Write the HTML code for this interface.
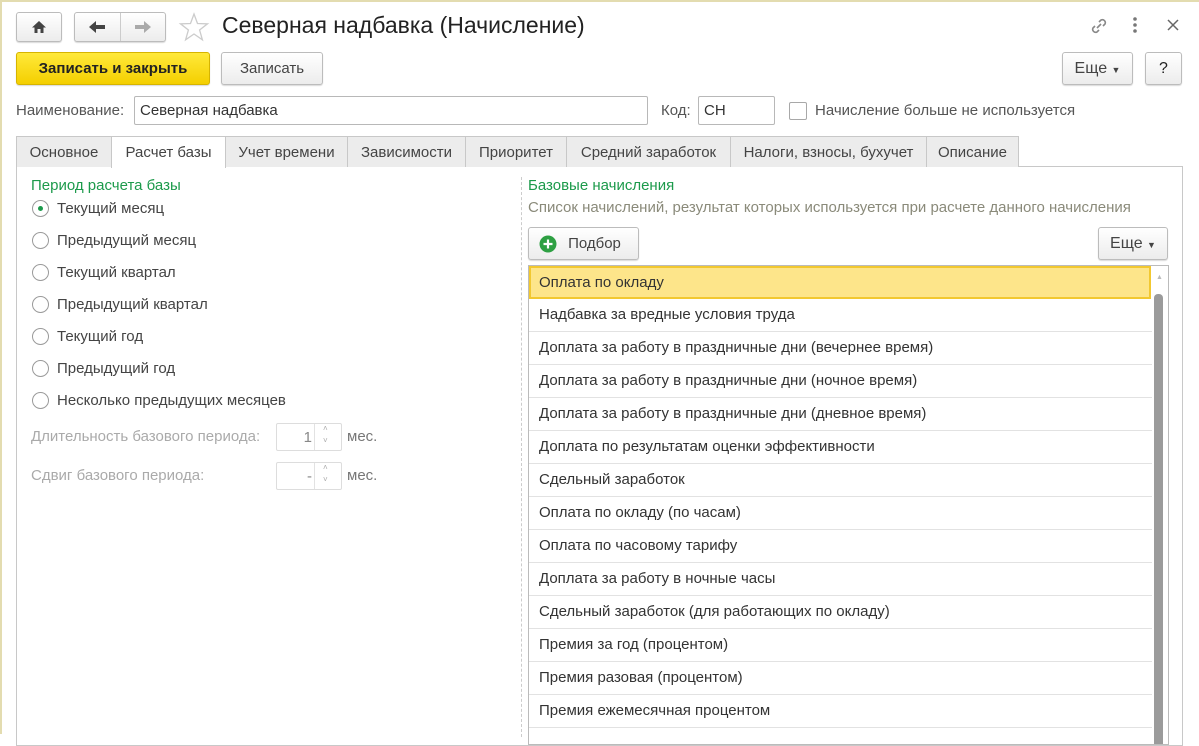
<!DOCTYPE html>
<html><head><meta charset="utf-8"><style>
*{box-sizing:border-box;margin:0;padding:0}
body{width:1199px;height:734px;overflow:hidden;background:#fff;font-family:"Liberation Sans",Arial,sans-serif;font-size:15px;color:#333;position:relative}
.a{position:absolute}
.btn{position:absolute;border:1px solid #bcbcbc;border-radius:3px;background:linear-gradient(#fff,#ececec);box-shadow:0 1px 1px rgba(0,0,0,.15);text-align:center;color:#444}
.inp{position:absolute;border:1px solid #b8b8b8;border-radius:2px;background:#fff;padding-left:5px;color:#333}
.tab{position:absolute;top:136px;height:31px;border:1px solid #c8c8c8;border-bottom:none;background:#ececec;line-height:31px;text-align:center;color:#444}
.rad{position:absolute;left:32px;width:17px;height:17px;border:1px solid #9a9a9a;border-radius:50%;background:#fff}
.rl{position:absolute;left:57px;color:#444}
.row{position:absolute;left:529px;width:623px;height:33px;border-bottom:1px solid #e2e2e2;line-height:32px;padding-left:10px;color:#333}
</style></head><body>
<div class="a" style="left:0;top:0;width:1199px;height:2px;background:#e3dcb0"></div>
<div class="a" style="left:0;top:0;width:2px;height:734px;background:#e3dcb0"></div>

<div class="btn" style="left:16px;top:12px;width:46px;height:30px"><svg width="16" height="16" viewBox="0 0 16 16" style="margin-top:6px"><path d="M8 2 L1 8.5 H3.5 V14 H6.5 V10 H9.5 V14 H12.5 V8.5 H15 Z" fill="#444"/></svg></div>
<div class="btn" style="left:74px;top:12px;width:92px;height:30px"></div>
<div class="a" style="left:120px;top:13px;width:1px;height:28px;background:#ccc"></div>
<svg class="a" style="left:88px;top:19px" width="18" height="16"><path d="M1 8 L8 2 V6 H17 V10 H8 V14 Z" fill="#444"/></svg>
<svg class="a" style="left:134px;top:19px" width="18" height="16"><path d="M17 8 L10 2 V6 H1 V10 H10 V14 Z" fill="#aaa"/></svg>
<svg class="a" style="left:178px;top:11px" width="32" height="32" viewBox="0 0 32 32"><path d="M16 3 L19.5 12.5 L29.5 12.8 L21.6 19 L24.4 28.8 L16 23 L7.6 28.8 L10.4 19 L2.5 12.8 L12.5 12.5 Z" fill="none" stroke="#ccc" stroke-width="1.3"/></svg>
<div class="a" style="left:222px;top:12px;font-size:23px;color:#222">Северная надбавка (Начисление)</div>
<svg class="a" style="left:1088px;top:15px" width="22" height="22" viewBox="0 0 22 22"><g fill="none" stroke="#888" stroke-width="1.6"><path d="M9 13 L13 9"/><path d="M11 7 L13 5 A3 3 0 0 1 17 9 L15 11"/><path d="M11 15 L9 17 A3 3 0 0 1 5 13 L7 11"/></g></svg>
<svg class="a" style="left:1131px;top:16px" width="8" height="18"><circle cx="4" cy="3" r="1.8" fill="#777"/><circle cx="4" cy="9" r="1.8" fill="#777"/><circle cx="4" cy="15" r="1.8" fill="#777"/></svg>
<svg class="a" style="left:1167px;top:19px" width="12" height="12"><path d="M1 1 L11 11 M11 1 L1 11" stroke="#666" stroke-width="1.5"/></svg>

<div class="btn" style="left:16px;top:52px;width:194px;height:33px;background:linear-gradient(#ffe93a,#f4cf00);border-color:#d6b400;font-weight:bold;color:#222;line-height:31px">Записать и закрыть</div>
<div class="btn" style="left:221px;top:52px;width:102px;height:33px;line-height:31px">Записать</div>
<div class="btn" style="left:1062px;top:52px;width:71px;height:33px;line-height:31px;font-size:16px">Еще <span style="font-size:9px">▼</span></div>
<div class="btn" style="left:1145px;top:52px;width:37px;height:33px;line-height:31px;font-size:16px;color:#222">?</div>

<div class="a" style="left:16px;top:102px;color:#555">Наименование:</div>
<div class="inp" style="left:134px;top:96px;width:514px;height:29px;line-height:27px">Северная надбавка</div>
<div class="a" style="left:661px;top:102px;color:#555">Код:</div>
<div class="inp" style="left:698px;top:96px;width:77px;height:29px;line-height:27px">СН</div>
<div class="a" style="left:789px;top:102px;width:18px;height:18px;border:1px solid #a8a8a8;border-radius:2px"></div>
<div class="a" style="left:815px;top:102px;color:#555">Начисление больше не используется</div>

<div class="a" style="left:16px;top:166px;width:1167px;height:580px;border:1px solid #c8c8c8"></div>
<div class="tab" style="left:16px;width:96px">Основное</div>
<div class="tab" style="left:111px;width:115px;background:#fff;height:32px">Расчет базы</div>
<div class="tab" style="left:225px;width:123px">Учет времени</div>
<div class="tab" style="left:347px;width:119px">Зависимости</div>
<div class="tab" style="left:465px;width:102px">Приоритет</div>
<div class="tab" style="left:566px;width:165px">Средний заработок</div>
<div class="tab" style="left:730px;width:197px">Налоги, взносы, бухучет</div>
<div class="tab" style="left:926px;width:93px">Описание</div>

<div class="a" style="left:31px;top:177px;color:#1c9a4b">Период расчета базы</div>
<div class="rad" style="top:200px"><div class="a" style="left:5px;top:5px;width:5px;height:5px;border-radius:50%;background:#1c9a4b"></div></div>
<div class="rl" style="top:200px">Текущий месяц</div>
<div class="rad" style="top:232px"></div><div class="rl" style="top:232px">Предыдущий месяц</div>
<div class="rad" style="top:264px"></div><div class="rl" style="top:264px">Текущий квартал</div>
<div class="rad" style="top:296px"></div><div class="rl" style="top:296px">Предыдущий квартал</div>
<div class="rad" style="top:328px"></div><div class="rl" style="top:328px">Текущий год</div>
<div class="rad" style="top:360px"></div><div class="rl" style="top:360px">Предыдущий год</div>
<div class="rad" style="top:392px"></div><div class="rl" style="top:392px">Несколько предыдущих месяцев</div>

<div class="a" style="left:31px;top:428px;color:#aaa">Длительность базового периода:</div>
<div class="inp" style="left:276px;top:423px;width:66px;height:28px;border-color:#ddd"><span class="a" style="left:0;width:35px;text-align:right;top:5px;color:#888">1</span><div class="a" style="left:37px;top:0;width:1px;height:26px;background:#e2e2e2"></div><span class="a" style="left:46px;top:0;font-size:8px;color:#aaa">˄</span><span class="a" style="left:46px;top:12px;font-size:8px;color:#aaa">˅</span></div>
<div class="a" style="left:347px;top:428px;color:#777">мес.</div>
<div class="a" style="left:31px;top:467px;color:#aaa">Сдвиг базового периода:</div>
<div class="inp" style="left:276px;top:462px;width:66px;height:28px;border-color:#ddd"><span class="a" style="left:0;width:35px;text-align:right;top:5px;color:#888">-</span><div class="a" style="left:37px;top:0;width:1px;height:26px;background:#e2e2e2"></div><span class="a" style="left:46px;top:0;font-size:8px;color:#aaa">˄</span><span class="a" style="left:46px;top:12px;font-size:8px;color:#aaa">˅</span></div>
<div class="a" style="left:347px;top:467px;color:#777">мес.</div>

<div class="a" style="left:521px;top:177px;height:560px;border-left:1px dashed #ccc"></div>
<div class="a" style="left:528px;top:177px;color:#1c9a4b">Базовые начисления</div>
<div class="a" style="left:528px;top:199px;color:#8a8a7a">Список начислений, результат которых используется при расчете данного начисления</div>

<div class="btn" style="left:528px;top:227px;width:111px;height:33px;line-height:31px;padding-left:22px;color:#444"><svg class="a" style="left:10px;top:7px" width="18" height="18"><circle cx="9" cy="9" r="8.5" fill="#2ea043"/><path d="M9 4.5 V13.5 M4.5 9 H13.5" stroke="#fff" stroke-width="2.2"/></svg>Подбор</div>
<div class="btn" style="left:1098px;top:227px;width:70px;height:33px;line-height:31px;font-size:16px">Еще <span style="font-size:9px">▼</span></div>

<div class="a" style="left:528px;top:265px;width:641px;height:480px;border:1px solid #bbb"></div>
<div class="row" style="top:266px;background:#fde58a;border:2px solid #f2c830;line-height:29px;padding-left:8px;width:622px">Оплата по окладу</div>
<div class="row" style="top:299px">Надбавка за вредные условия труда</div>
<div class="row" style="top:332px">Доплата за работу в праздничные дни (вечернее время)</div>
<div class="row" style="top:365px">Доплата за работу в праздничные дни (ночное время)</div>
<div class="row" style="top:398px">Доплата за работу в праздничные дни (дневное время)</div>
<div class="row" style="top:431px">Доплата по результатам оценки эффективности</div>
<div class="row" style="top:464px">Сдельный заработок</div>
<div class="row" style="top:497px">Оплата по окладу (по часам)</div>
<div class="row" style="top:530px">Оплата по часовому тарифу</div>
<div class="row" style="top:563px">Доплата за работу в ночные часы</div>
<div class="row" style="top:596px">Сдельный заработок (для работающих по окладу)</div>
<div class="row" style="top:629px">Премия за год (процентом)</div>
<div class="row" style="top:662px">Премия разовая (процентом)</div>
<div class="row" style="top:695px">Премия ежемесячная процентом</div>
<div class="a" style="left:1156px;top:274px;font-size:7px;color:#bbb">▲</div>
<div class="a" style="left:1154px;top:294px;width:9px;height:450px;background:#9b9b9b;border-radius:4px 4px 0 0"></div>
</body></html>
